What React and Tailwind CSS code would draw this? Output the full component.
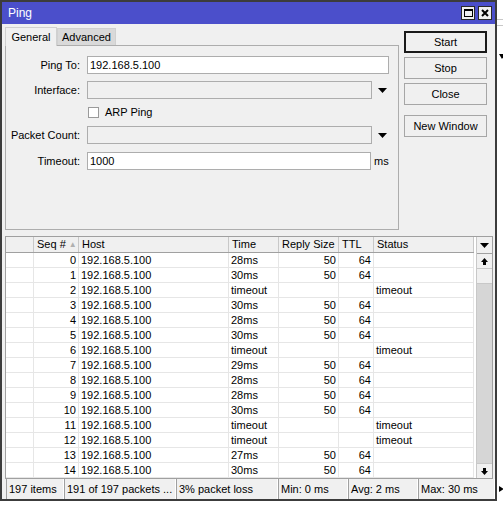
import React from 'react';

const rows = [
  [0, '28ms', '50', '64', ''],
  [1, '30ms', '50', '64', ''],
  [2, 'timeout', '', '', 'timeout'],
  [3, '30ms', '50', '64', ''],
  [4, '28ms', '50', '64', ''],
  [5, '30ms', '50', '64', ''],
  [6, 'timeout', '', '', 'timeout'],
  [7, '29ms', '50', '64', ''],
  [8, '28ms', '50', '64', ''],
  [9, '28ms', '50', '64', ''],
  [10, '30ms', '50', '64', ''],
  [11, 'timeout', '', '', 'timeout'],
  [12, 'timeout', '', '', 'timeout'],
  [13, '27ms', '50', '64', ''],
  [14, '30ms', '50', '64', ''],
];

function DropArrow() {
  return (
    <svg width="9" height="5" viewBox="0 0 9 5" className="block">
      <path d="M0 0h9L4.5 5z" fill="#000" />
    </svg>
  );
}

function ScrollArrow({ up }) {
  return (
    <svg width="7" height="7" viewBox="0 0 7 7" className="block">
      {up ? <path d="M3.5 0L7 4H5v3H2V4H0z" fill="#000" /> : <path d="M3.5 7L7 3H5V0H2v3H0z" fill="#000" />}
    </svg>
  );
}

function FormRow({ label, children, className = '' }) {
  return (
    <div className={`flex items-center h-[18px] ${className}`}>
      <div className="w-[75px] text-right pr-[1px]">{label}</div>
      <div className="ml-[6px] flex items-center">{children}</div>
    </div>
  );
}

function Btn({ children, primary, className = '' }) {
  return (
    <div
      className={`h-[22px] w-[83px] flex items-center justify-center bg-[#f0f0f0] ${
        primary ? 'border-2 border-[#1a1a1a]' : 'border border-[#a6a6a6]'
      } ${className}`}
    >
      {children}
    </div>
  );
}

export default function App() {
  return (
    <div
      className="w-[503px] h-[505px] bg-white relative overflow-hidden text-[11px] text-black leading-none"
      style={{ fontFamily: '"Liberation Sans", Arial, sans-serif' }}
    >
      {/* bits of the window behind */}
      <div className="absolute left-[497px] top-[19px] w-[6px] h-px bg-[#c8c8c8]" />
      <div className="absolute left-[497px] top-[25px] w-[6px] h-px bg-[#c8c8c8]" />
      <div className="absolute left-[499px] top-[54px]">
        <svg width="6" height="5" viewBox="0 0 6 5"><path d="M0 0h6L3 5z" fill="#000" /></svg>
      </div>
      <div className="absolute left-[499px] top-[486px]">
        <svg width="5" height="6" viewBox="0 0 5 6"><path d="M0 0v6L5 3z" fill="#000" /></svg>
      </div>

      <div className="w-[497px] h-[501px] border-2 border-[#3c3c3c] bg-[#f0f0f0] flex flex-col">
        {/* title bar */}
        <div className="h-[22px] bg-[#4b4fcb] flex items-center pl-[6px] pr-[3px]">
          <span className="text-white text-[12px]">Ping</span>
          <div className="ml-auto flex gap-[3px]">
            <div className="w-[14px] h-[14px] border border-[#2a2a2a] bg-[#f0f0f0] flex items-center justify-center">
              <div className="w-[9px] h-[8px] border border-black border-t-2" />
            </div>
            <div className="w-[14px] h-[14px] border border-[#2a2a2a] bg-[#f0f0f0] flex items-center justify-center">
              <svg width="8" height="8" viewBox="0 0 8 8">
                <path d="M1 1L7 7M7 1L1 7" stroke="#000" strokeWidth="2" />
              </svg>
            </div>
          </div>
        </div>

        <div className="flex-1 flex flex-col pl-[3px]">
          {/* top section */}
          <div className="flex mt-[2px]">
            <div className="w-[394px] flex flex-col">
              <div className="flex h-[19px] items-end">
                <div className="h-[19px] w-[52px] border border-b-0 border-[#d0d0d0] bg-[#f0f0f0] flex items-center justify-center relative top-px z-10">
                  General
                </div>
                <div className="h-[17px] w-[59px] border border-b-0 border-[#d0d0d0] bg-[#d9d9d9] flex items-center justify-center">
                  Advanced
                </div>
              </div>
              <div className="h-[185px] border border-[#adadad] flex flex-col">
                <FormRow label="Ping To:" className="mt-[10px]">
                  <div className="w-[302px] h-[18px] bg-white border border-[#adadad] flex items-center pl-[2px]">
                    192.168.5.100
                  </div>
                </FormRow>
                <FormRow label="Interface:" className="mt-[7px]">
                  <div className="w-[285px] h-[18px] border border-[#adadad]" />
                  <div className="ml-[6px]"><DropArrow /></div>
                </FormRow>
                <div className="flex items-center h-[11px] mt-[8px] pl-[82px]">
                  <div className="w-[11px] h-[11px] bg-white border border-[#9a9a9a]" />
                  <span className="ml-[6px]">ARP Ping</span>
                </div>
                <FormRow label="Packet Count:" className="mt-[8px]">
                  <div className="w-[285px] h-[18px] border border-[#adadad]" />
                  <div className="ml-[6px]"><DropArrow /></div>
                </FormRow>
                <FormRow label="Timeout:" className="mt-[8px]">
                  <div className="w-[284px] h-[18px] bg-white border border-[#adadad] flex items-center pl-[2px]">
                    1000
                  </div>
                  <span className="ml-[3px]">ms</span>
                </FormRow>
              </div>
            </div>
            <div className="ml-[5px] flex flex-col pt-[5px]">
              <Btn primary>Start</Btn>
              <Btn className="mt-[4px]">Stop</Btn>
              <Btn className="mt-[4px]">Close</Btn>
              <Btn className="mt-[10px]">New Window</Btn>
            </div>
          </div>

          {/* table */}
          <div className="mt-[6px] w-[488px] h-[243px] border border-[#a0a0a0] bg-white flex overflow-hidden">
            <div className="w-[468px] flex flex-col">
              <div className="flex h-[17px] bg-[#f0f0f0] border-b border-[#a0a0a0]">
                <div className="w-[28px] border-r border-[#c8c8c8]" />
                <div className="w-[45px] border-r border-[#c8c8c8] flex items-center pl-[3px]">
                  Seq #
                  <span className="ml-[3px] text-[8px] text-[#b0b0b0]">▲</span>
                </div>
                <div className="w-[150px] border-r border-[#c8c8c8] flex items-center pl-[3px]">Host</div>
                <div className="w-[50px] border-r border-[#c8c8c8] flex items-center pl-[3px]">Time</div>
                <div className="w-[60px] border-r border-[#c8c8c8] flex items-center pl-[3px]">Reply Size</div>
                <div className="w-[35px] border-r border-[#c8c8c8] flex items-center pl-[3px]">TTL</div>
                <div className="w-[100px] border-r border-[#c8c8c8] flex items-center pl-[3px]">Status</div>
              </div>
              {rows.map((r) => (
                <div key={r[0]} className="flex h-[15px] border-b border-[#e6e6e6] shrink-0">
                  <div className="w-[28px] border-r border-[#e6e6e6]" />
                  <div className="w-[45px] border-r border-[#e6e6e6] flex items-center justify-end pr-[2px]">{r[0]}</div>
                  <div className="w-[150px] border-r border-[#e6e6e6] flex items-center pl-[2px]">192.168.5.100</div>
                  <div className="w-[50px] border-r border-[#e6e6e6] flex items-center pl-[2px]">{r[1]}</div>
                  <div className="w-[60px] border-r border-[#e6e6e6] flex items-center justify-end pr-[2px]">{r[2]}</div>
                  <div className="w-[35px] border-r border-[#e6e6e6] flex items-center justify-end pr-[2px]">{r[3]}</div>
                  <div className="w-[100px] border-r border-[#e6e6e6] flex items-center pl-[2px]">{r[4]}</div>
                </div>
              ))}
            </div>
            <div className="ml-[2px] w-[16px] border-l border-[#c8c8c8] flex flex-col">
              <div className="h-[17px] bg-[#f0f0f0] border-b border-[#a0a0a0] flex items-center justify-center">
                <DropArrow />
              </div>
              <div className="h-[15px] bg-[#f0f0f0] border-b border-[#c8c8c8] flex items-center justify-center">
                <ScrollArrow up />
              </div>
              <div className="h-[15px] bg-[#f0f0f0] border-b border-[#c8c8c8]" />
              <div className="flex-1 bg-[#d6d6d6]" />
              <div className="h-[15px] bg-[#f0f0f0] border-t border-[#c8c8c8] flex items-center justify-center">
                <ScrollArrow />
              </div>
            </div>
          </div>

          {/* status bar */}
          <div className="h-[20px] flex pl-px">
            {[
              ['197 items', 58],
              ['191 of 197 packets ...', 112],
              ['3% packet loss', 102],
              ['Min: 0 ms', 70],
              ['Avg: 2 ms', 70],
              ['Max: 30 ms', 77],
            ].map(([t, w]) => (
              <div
                key={t}
                className="h-[20px] border-l border-[#a0a0a0] border-r border-r-white flex items-center pl-[2px] whitespace-nowrap"
                style={{ width: w }}
              >
                {t}
              </div>
            ))}
          </div>
        </div>
      </div>
    </div>
  );
}
